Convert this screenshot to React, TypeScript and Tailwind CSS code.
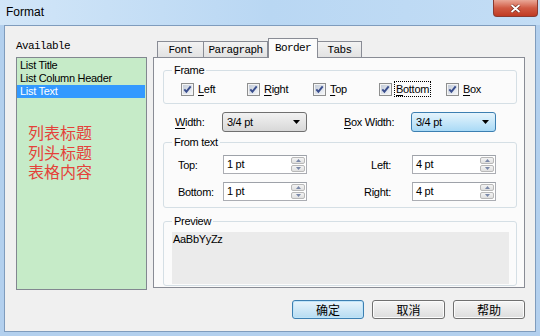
import React from "react";

const SANS = "font-['Liberation_Sans','Noto_Sans_CJK_SC',sans-serif]";
const MONO = "font-['Liberation_Mono',monospace] text-[11px] tracking-[-0.6px]";
const CJK = "font-['Noto_Sans_CJK_SC',sans-serif] tracking-normal";

function CheckIcon() {
  return (
    <svg width="13" height="13" viewBox="0 0 13 13" className="shrink-0">
      <defs>
        <linearGradient id="cbg" x1="0" y1="0" x2="1" y2="1">
          <stop offset="0" stopColor="#c4ccd8" />
          <stop offset="1" stopColor="#f4f6f9" />
        </linearGradient>
      </defs>
      <rect x="0.5" y="0.5" width="12" height="12" fill="#f4f4f4" stroke="#8e8f8f" />
      <rect x="2" y="2" width="9" height="9" fill="url(#cbg)" />
      <path d="M3.3 6.3 L5.4 8.7 L9.7 3.3" fill="none" stroke="#3b4f8e" strokeWidth="1.9" />
    </svg>
  );
}

function Cb({ first, rest, w, focus }: { first: string; rest: string; w: string; focus?: boolean }) {
  return (
    <div className={`flex items-center gap-[3px] ${w}`}>
      <CheckIcon />
      <span
        className={`leading-[14px] px-[1px] ${focus ? "outline-1 outline-dotted outline-black" : ""}`}
      >
        <span className="underline underline-offset-[2px]">{first}</span>
        {rest}
      </span>
    </div>
  );
}

function Drop({ active }: { active?: boolean }) {
  return (
    <div
      className={`w-[85px] h-[20px] rounded-[3px] border flex items-center justify-between pl-[4px] pr-[6px] ${
        active
          ? "border-[#3c7fb1] bg-linear-to-b from-[#e5f4fc] to-[#a9daf6]"
          : "border-[#707070] bg-linear-to-b from-[#f2f2f2] to-[#d8d8d8]"
      }`}
    >
      <span className="leading-[14px]">3/4 pt</span>
      <svg width="7" height="4" viewBox="0 0 7 4">
        <path d="M0 0h7L3.5 4z" fill="#000" />
      </svg>
    </div>
  );
}

function Spin({ v }: { v: string }) {
  return (
    <div className="w-[84px] h-[19px] border border-[#abadb3] border-t-[#9ea2a9] bg-white flex">
      <span className="flex-1 pl-[3px] leading-[16px]">{v}</span>
      <div className="w-[15px] flex flex-col gap-[1px] p-[1px] pl-0">
        <div className="flex-1 border border-[#b8b8b8] rounded-[2px] bg-linear-to-b from-[#f4f4f4] to-[#e0e0e0] flex items-center justify-center">
          <svg width="5" height="3" viewBox="0 0 5 3">
            <path d="M0 3h5L2.5 0z" fill="#7a88a8" />
          </svg>
        </div>
        <div className="flex-1 border border-[#b8b8b8] rounded-[2px] bg-linear-to-b from-[#f4f4f4] to-[#e0e0e0] flex items-center justify-center">
          <svg width="5" height="3" viewBox="0 0 5 3">
            <path d="M0 0h5L2.5 3z" fill="#7a88a8" />
          </svg>
        </div>
      </div>
    </div>
  );
}

function Btn({ label, w, def }: { label: string; w: string; def?: boolean }) {
  return (
    <div
      className={`${w} h-[19px] rounded-[3px] border flex items-center justify-center ${CJK} text-[12px] leading-[14px] ${
        def
          ? "border-[#3c7fb1] bg-linear-to-b from-[#e8f4fb] to-[#b6dcf2] shadow-[inset_0_0_0_1px_#bfe4f9]"
          : "border-[#707070] bg-linear-to-b from-[#f6f6f6] to-[#dcdcdc] shadow-[inset_0_0_0_1px_#fcfcfc]"
      }`}
    >
      {label}
    </div>
  );
}

export default function App() {
  return (
    <div className={`w-[540px] h-[336px] bg-[#b3d0ee] flex flex-col overflow-hidden text-[11px] tracking-[-0.3px] text-black ${SANS}`}>
      {/* title bar */}
      <div className="h-[25px] flex items-start bg-linear-to-r from-[#d2e6f8] via-[#b9d7f3] to-[#c3ddf5]">
        <div className="pl-[6px] pt-[5px] leading-[14px] text-[12px] tracking-normal">Format</div>
        <div className="ml-auto mr-[2px] w-[45px] h-[17px] rounded-b-[4px] border border-t-0 border-[#8a3a30] bg-linear-to-b from-[#e9a797] via-[#d05a43] to-[#c03a22] flex items-center justify-center">
          <svg width="11" height="9" viewBox="0 0 11 9">
            <path d="M1.5 1 L9.5 8 M9.5 1 L1.5 8" stroke="#6a2418" strokeWidth="3" />
            <path d="M1.5 1 L9.5 8 M9.5 1 L1.5 8" stroke="#ffffff" strokeWidth="1.8" />
          </svg>
        </div>
      </div>

      {/* client area */}
      <div className="ml-[4px] w-[532px] h-[307px] border border-[#7f9cbd] bg-[#f0f0f0] flex">
        {/* left column */}
        <div className="ml-[11px] w-[131px] flex flex-col">
          <div className={`${MONO} mt-[14px] h-[13px] leading-[13px] mb-[4px]`}>Available</div>
          <div className="h-[233px] border border-[#828790] bg-[#c6ebc8] pt-[1px] flex flex-col">
            <div className="pl-[3px] h-[13px] leading-[13px]">List Title</div>
            <div className="pl-[3px] h-[13px] leading-[13px]">List Column Header</div>
            <div className="pl-[3px] h-[13px] leading-[13px] bg-[#3399ff] text-white mr-[1px]">List Text</div>
            <div className={`mt-[25px] pl-[11px] text-[16px] leading-[19.5px] text-[#e4423a] ${CJK}`}>
              <div>列表标题</div>
              <div>列头标题</div>
              <div>表格内容</div>
            </div>
          </div>
        </div>

        {/* right column */}
        <div className="ml-[6px] w-[372px] flex flex-col pt-[12px]">
          {/* tabs */}
          <div className={`flex h-[20px] items-start pl-[4px] ${MONO}`}>
            <div className="mt-[3px] w-[47px] h-[17px] border border-[#898c95] border-b-0 bg-linear-to-b from-[#f3f3f3] to-[#e1e1e1] flex items-center justify-center leading-[13px]">
              Font
            </div>
            <div className="mt-[3px] w-[64px] h-[17px] border border-l-0 border-[#898c95] border-b-0 bg-linear-to-b from-[#f3f3f3] to-[#e1e1e1] flex items-center justify-center leading-[13px]">
              Paragraph
            </div>
            <div className="relative z-10 w-[50px] h-[20px] border border-[#898c95] border-b-0 bg-[#fbfbfb] flex items-start justify-center pt-[3px] leading-[13px]">
              Border
            </div>
            <div className="mt-[3px] w-[44px] h-[17px] border border-l-0 border-[#898c95] border-b-0 bg-linear-to-b from-[#f3f3f3] to-[#e1e1e1] flex items-center justify-center leading-[13px]">
              Tabs
            </div>
          </div>

          {/* panel */}
          <div className="-mt-[1px] h-[231px] border border-[#898c95] bg-[#fbfbfb] flex flex-col pl-[9px]">
            {/* Frame */}
            <fieldset className="mt-[5px] w-[354px] h-[41px] border border-[#d5dfe5] rounded-[3px]">
              <legend className="ml-[8px] px-[2px] leading-[14px]">Frame</legend>
              <div className="flex mt-[5px] pl-[17px]">
                <Cb first="L" rest="eft" w="w-[66px]" />
                <Cb first="R" rest="ight" w="w-[66px]" />
                <Cb first="T" rest="op" w="w-[66px]" />
                <Cb first="B" rest="ottom" w="w-[67px]" focus />
                <Cb first="B" rest="ox" w="w-[60px]" />
              </div>
            </fieldset>

            {/* width row */}
            <div className="mt-[8px] h-[20px] flex items-center">
              <div className="ml-[12px] w-[47px] leading-[14px]">
                <span className="underline underline-offset-[2px]">W</span>idth:
              </div>
              <Drop />
              <div className="ml-[37px] w-[67px] leading-[14px]">
                <span className="underline underline-offset-[2px]">B</span>ox Width:
              </div>
              <Drop active />
            </div>

            {/* From text */}
            <fieldset className="mt-[3px] w-[354px] h-[73px] border border-[#d5dfe5] rounded-[3px]">
              <legend className="ml-[8px] px-[2px] leading-[14px]">From text</legend>
              <div className="mt-[6px] flex items-center pl-[14px]">
                <div className="w-[45px] leading-[14px]">Top:</div>
                <Spin v="1 pt" />
                <div className="w-[84px] text-right leading-[14px]">Left:</div>
                <div className="w-[21px]" />
                <Spin v="4 pt" />
              </div>
              <div className="mt-[8px] flex items-center pl-[14px]">
                <div className="w-[45px] leading-[14px]">Bottom:</div>
                <Spin v="1 pt" />
                <div className="w-[84px] text-right leading-[14px]">Right:</div>
                <div className="w-[21px]" />
                <Spin v="4 pt" />
              </div>
            </fieldset>

            {/* Preview */}
            <fieldset className="mt-[6px] w-[354px] h-[72px] border border-[#d5dfe5] rounded-[3px]">
              <legend className="ml-[8px] px-[2px] leading-[14px]">Preview</legend>
              <div className="mt-[4px] ml-[8px] w-[337px] h-[52px] bg-[#ebebeb] pl-[1px] pt-[1px] leading-[13px]">
                AaBbYyZz
              </div>
            </fieldset>
          </div>

          {/* buttons */}
          <div className="mt-[12px] flex justify-end gap-[8px]">
            <Btn label="确定" w="w-[72px]" def />
            <Btn label="取消" w="w-[73px]" />
            <Btn label="帮助" w="w-[72px]" />
          </div>
        </div>
      </div>
    </div>
  );
}
